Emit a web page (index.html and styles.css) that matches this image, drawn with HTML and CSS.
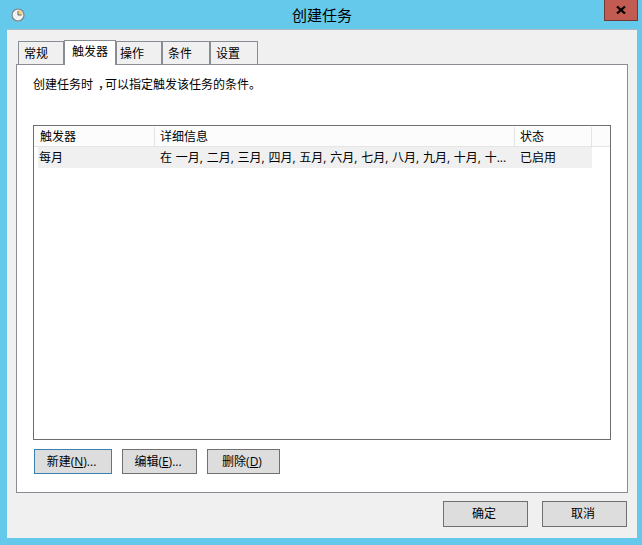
FILE: index.html
```html
<!DOCTYPE html>
<html lang="zh">
<head>
<meta charset="utf-8">
<title>创建任务</title>
<link rel="stylesheet" href="styles.css">
</head>
<body>
<div class="window">
  <div class="titlebar">
    <svg class="app-icon" width="14" height="14" viewBox="0 0 14 14">
      <circle cx="7" cy="7" r="6" fill="#f1f1f1" stroke="#7d8488" stroke-width="1.2"/>
      <path d="M7 7V2a5 5 0 0 1 5 5z" fill="#f3d28c"/>
      <path d="M7 3v4h3.5" fill="none" stroke="#5b6469" stroke-width="1"/>
    </svg>
    <div class="title">创建任务</div>
    <div class="close"><svg width="10" height="8" viewBox="0 0 10 8"><path d="M1 0.5l8 7M9 0.5l-8 7" stroke="#000" stroke-width="2.2" fill="none"/></svg></div>
  </div>
  <div class="client">
    <div class="tabs">
      <div class="tab tab-1">常规</div>
      <div class="tab tab-active">触发器</div>
      <div class="tab tab-2">操作</div>
      <div class="tab tab-3">条件</div>
      <div class="tab tab-4">设置</div>
    </div>
    <div class="panel">
      <p class="desc">创建任务时<span class="comma">，</span>可以指定触发该任务的条件。</p>
      <div class="list">
        <div class="list-head">
          <div class="cell col-a">触发器</div>
          <div class="cell col-b">详细信息</div>
          <div class="cell col-c">状态</div>
          <div class="cell col-d"></div>
        </div>
        <div class="list-row">
          <div class="row-a">每月</div>
          <div class="row-b">在 一月, 二月, 三月, 四月, 五月, 六月, 七月, 八月, 九月, 十月, 十...</div>
          <div class="row-c">已启用</div>
        </div>
      </div>
      <div class="actions">
        <button class="btn btn-new">新建(<u>N</u>)...</button>
        <button class="btn btn-edit">编辑(<u>E</u>)...</button>
        <button class="btn btn-del">删除(<u>D</u>)</button>
      </div>
    </div>
    <div class="footer">
      <button class="btn btn-foot">确定</button>
      <button class="btn btn-foot">取消</button>
    </div>
  </div>
</div>
</body>
</html>
```
FILE: styles.css
```css
* { box-sizing: border-box; }
html, body { margin: 0; padding: 0; }
body {
  width: 642px;
  height: 545px;
  overflow: hidden;
  font-family: "Open Sans", "Noto Sans CJK SC", sans-serif;
  font-size: 12px;
  color: #000;
}
.window {
  width: 642px;
  height: 545px;
  background: #65c9ec;
  padding: 0 5px 7px 7px;
  display: flex;
  flex-direction: column;
}
.titlebar {
  height: 29px;
  flex: none;
  display: flex;
  align-items: flex-start;
}
.app-icon { margin: 8px 0 0 4px; flex: none; }
.title {
  flex: 1;
  text-align: center;
  font-size: 15px;
  line-height: 20px;
  padding-top: 5px;
  margin-left: 11px;
  margin-right: -4px;
  color: #000;
}
.close {
  width: 34px;
  height: 21px;
  flex: none;
  margin-right: -1px;
  background: #c25b52;
  border: 1px solid #6f3b39;
  border-top: 0;
  display: flex;
  align-items: center;
  justify-content: center;
}
.client {
  flex: 1;
  background: #f0f0f0;
  border-top: 1px solid #a9b9c3;
  padding: 10px 9px 0 9px;
  display: flex;
  flex-direction: column;
}
.tabs {
  height: 25px;
  flex: none;
  display: flex;
  align-items: flex-end;
  padding-left: 2px;
  position: relative;
  z-index: 1;
  margin-bottom: -1px;
}
.tab {
  height: 23px;
  background: #f0f0f0;
  border: 1px solid #8a8c94;
  border-bottom: 0;
  line-height: 18px;
  margin-bottom: 1px;
  padding-top: 3px;
}
.tab-1 { width: 46px; padding-left: 5px; }
.tab-2 { width: 46px; padding-left: 3px; }
.tab-3 { width: 48px; padding-left: 5px; }
.tab-4 { width: 48px; padding-left: 5px; }
.tab-active {
  width: 52px;
  height: 25px;
  margin-bottom: 0;
  background: #fff;
  padding: 2px 0 0 7px;
}
.panel {
  height: 429px;
  flex: none;
  background: #fff;
  border: 1px solid #8a8c94;
  padding: 11px 16px 0 16px;
  display: flex;
  flex-direction: column;
}
.desc {
  margin: 0;
  height: 18px;
  line-height: 18px;
  font-size: 12px;
}
.comma {
  margin-left: 5px;
  letter-spacing: -5px;
}
.list {
  margin-top: 31px;
  height: 315px;
  flex: none;
  border: 1px solid #6e6e6e;
  padding-top: 1px;
}
.list-head {
  display: flex;
  height: 20px;
  border-bottom: 1px solid #e5e5e5;
  background: #fcfcfc;
}
.cell {
  line-height: 20px;
  padding-left: 5px;
  border-right: 1px solid #e5e5e5;
  flex: none;
}
.col-a { width: 121px; padding-left: 6px; }
.col-b { width: 360px; }
.col-c { width: 77px; }
.col-d { flex: 1; border-right: 0; }
.list-row {
  display: flex;
  height: 21px;
  margin: 0 18px 0 4px;
  background: #f0f0f0;
  line-height: 21px;
}
.row-a { width: 117px; padding-left: 1px; flex: none; }
.row-b { width: 360px; padding-left: 5px; flex: none; white-space: nowrap; overflow: hidden; word-spacing: 0.67px; }
.row-c { padding-left: 5px; flex: none; }
.actions {
  display: flex;
  gap: 10px;
  margin-top: 9px;
  padding-left: 1px;
}
.btn {
  font: inherit;
  color: #000;
  height: 25px;
  padding: 0 3px 0 0;
  background: #dddddd;
  border: 1px solid #707070;
  border-radius: 0;
  line-height: 22px;
}
.btn u { text-underline-offset: 1px; }
.btn-new { width: 78px; border-color: #3c7fb1; }
.btn-edit { width: 75px; }
.btn-del { width: 73px; }
.footer {
  display: flex;
  justify-content: flex-end;
  gap: 14px;
  padding: 8px 1px 0 0;
}
.btn-foot { width: 85px; height: 26px; }
```
